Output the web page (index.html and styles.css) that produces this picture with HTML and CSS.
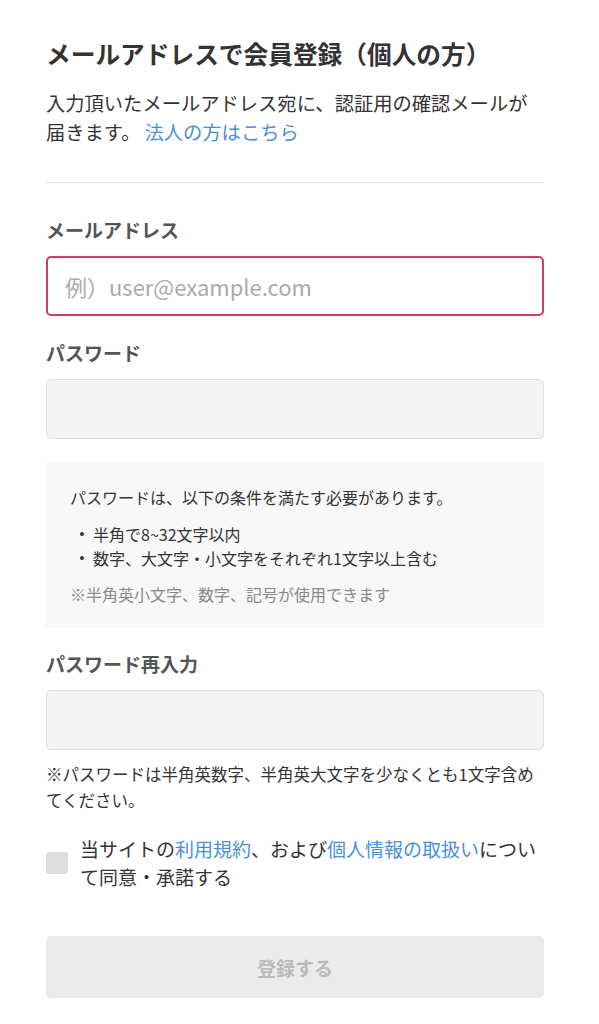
FILE: index.html
```html
<!DOCTYPE html>
<html lang="ja">
    <head>
        <meta charset="utf-8">
        <link rel="stylesheet" href="styles.css">
    </head>
    <body>
        <div class="content">
            <h1 class="title">メールアドレスで会員登録（個人の方）</h1>
            <p class="lead">
                入力頂いたメールアドレス宛に、認証用の確認メールが届きます。<a href="#" class="corp-link">法人の方はこちら</a>
            </p>
            <hr class="divider">

            <section class="field">
                <label class="field-label">メールアドレス</label>
                <input class="text-input is-error" type="email" placeholder="例）user@example.com">
            </section>

            <section class="field">
                <label class="field-label">パスワード</label>
                <input class="text-input" type="password">
            </section>

            <div class="password-rules">
                <p>パスワードは、以下の条件を満たす必要があります。</p>
                <ul>
                    <li>半角で8~32文字以内</li>
                    <li>数字、大文字・小文字をそれぞれ1文字以上含む</li>
                </ul>
                <p class="rules-note">※半角英小文字、数字、記号が使用できます</p>
            </div>

            <section class="field">
                <label class="field-label">パスワード再入力</label>
                <input class="text-input" type="password">
                <p class="field-note">※パスワードは半角英数字、半角英大文字を少なくとも1文字含めてください。</p>
            </section>

            <div class="agree">
                <span class="checkbox"></span>
                <p class="agree-text">当サイトの<a href="#">利用規約</a>、および<a href="#">個人情報の取扱い</a>について同意・承諾する</p>
            </div>

            <button class="submit" type="button" disabled>登録する</button>
        </div>
    </body>
</html>
```

FILE: styles.css
```css
* {
    box-sizing: border-box;
}

body {
    margin: 0;
    background-color: #ffffff;
    color: #333333;
    font-family: "Noto Sans CJK JP", "Noto Sans", sans-serif;
}

a {
    color: #4a90d9;
    text-decoration: none;
}

.content {
    padding: 35px 55px 0 46px;
}

.title {
    margin: 0;
    font-size: 24.7px;
    line-height: 36px;
    font-weight: bold;
    color: #333333;
}

.lead {
    margin: 18px 0 0;
    font-size: 19.3px;
    line-height: 29px;
    color: #333333;
}

.corp-link {
    margin-left: 4px;
}

.divider {
    margin: 35px 0 33px;
    border: none;
    border-top: 1px solid #e2e2e2;
}

.field {
    display: flex;
    flex-direction: column;
}

.field-label {
    font-size: 19px;
    line-height: 28px;
    font-weight: bold;
    color: #555555;
    margin-bottom: 12px;
}

.text-input {
    width: 100%;
    height: 60px;
    padding: 0 18px;
    border: 1px solid #e0e0e0;
    border-radius: 5px;
    background-color: #f4f4f4;
    font-family: "Noto Sans CJK JP", "Noto Sans", sans-serif;
    font-size: 22px;
    color: #333333;
    margin-bottom: 23px;
}

.text-input.is-error {
    background-color: #ffffff;
    border: 2px solid #cc3d62;
    padding: 0 17px;
}

.text-input::placeholder {
    color: #aaaaaa;
}

.password-rules {
    background-color: #f8f8f8;
    padding: 23px 24px 22px;
    font-size: 16px;
    line-height: 24px;
    color: #333333;
}

.password-rules p {
    margin: 0;
}

.password-rules ul {
    margin: 13px 0 12px;
    padding: 0;
    list-style: none;
}

.password-rules li {
    display: flex;
    align-items: center;
}

.password-rules li::before {
    content: "";
    flex: none;
    width: 4px;
    height: 4px;
    border-radius: 50%;
    background-color: #333333;
    margin: 0 9px 0 10px;
}

.password-rules .rules-note {
    color: #888888;
}

.password-rules + .field {
    margin-top: 22px;
}

.field-note {
    margin: -12px 0 0;
    font-size: 16.5px;
    line-height: 26px;
    color: #333333;
}

.agree {
    display: flex;
    align-items: center;
    gap: 12px;
    margin-top: 22px;
}

.checkbox {
    flex: none;
    width: 22px;
    height: 22px;
    border-radius: 3px;
    background-color: #dddddd;
}

.agree-text {
    margin: 0;
    font-size: 19px;
    line-height: 28px;
}

.submit {
    display: block;
    width: 100%;
    height: 62px;
    margin-top: 45px;
    border: none;
    border-radius: 5px;
    background-color: #ebebeb;
    color: #bbbbbb;
    font-family: "Noto Sans CJK JP", "Noto Sans", sans-serif;
    font-size: 19px;
    font-weight: bold;
}
```
